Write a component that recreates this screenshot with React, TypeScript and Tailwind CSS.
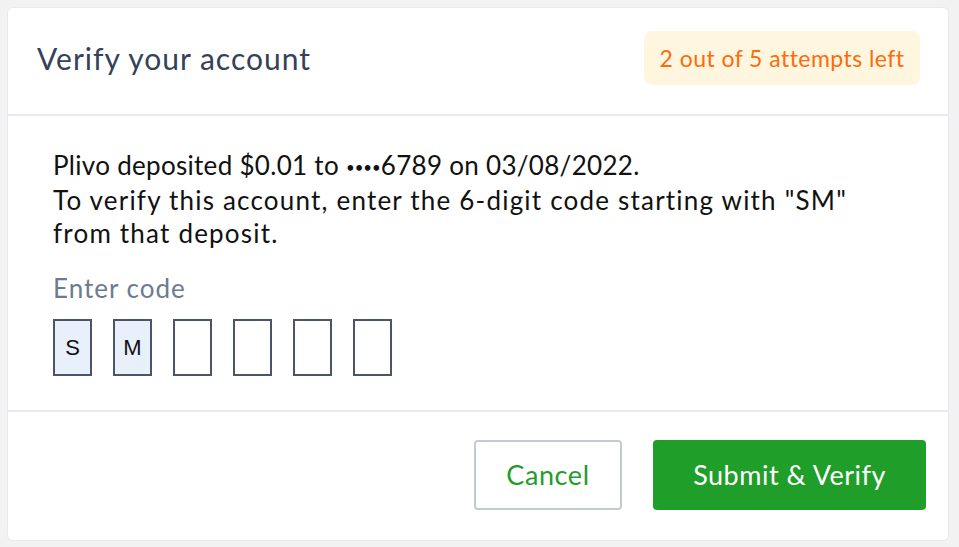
import React, { useState } from 'react';

const font = { fontFamily: 'Lato, "Open Sans", sans-serif' };

const CodeBox: React.FC<{ value: string }> = ({ value }) => (
  <div
    className={`w-[39px] h-[57px] border-2 border-[#4b5567] flex items-center justify-center text-[22px] text-[#111] ${
      value ? 'bg-[#e8f0fc]' : 'bg-white'
    }`}
    style={{ fontFamily: '"Liberation Sans", Arial, sans-serif' }}
  >
    {value}
  </div>
);

const App: React.FC = () => {
  const [code] = useState(['S', 'M', '', '', '', '']);

  return (
    <div className="min-h-screen bg-[#f2f2f3] p-[7px] pr-[10px]" style={font}>
      <div className="bg-white rounded-md border border-[#e6e9f0] w-[942px] h-[534px] flex flex-col">
        <div className="h-[108px] flex items-center justify-between pl-[29px] pr-[28px] border-b-2 border-[#e7ebf1]">
          <h1 className="text-[30px] text-[#33425a] tracking-[1px] -mt-[6px]">Verify your account</h1>
          <span className="bg-[#fff6e0] text-[#ff6a0a] text-[23px] tracking-[0.45px] rounded-lg h-[54px] w-[276px] flex items-center justify-center -mt-[6px]">
            2 out of 5 attempts left
          </span>
        </div>

        <div className="pl-[45px] pt-[33px] flex-1 border-b-2 border-[#e7ebf1]">
          <p className="text-[26px] leading-[33px] tracking-[1.2px] text-[#111]">
            <span className="tracking-[0.3px]">
              Plivo deposited $0.01 to <span className="text-[15px] tracking-[0px] align-[2px]">••••</span>6789 on 03/08/2022.
            </span>
            <br />
            To verify this account, enter the 6-digit code starting with "SM"
            <br />
            from that deposit.
          </p>
          <div className="text-[26px] tracking-[1px] text-[#6d7b90] mt-[19px]">Enter code</div>
          <div className="flex gap-[21px] mt-[11px]">
            {code.map((c, i) => (
              <CodeBox key={i} value={c} />
            ))}
          </div>
        </div>

        <div className="h-[128px] flex items-center justify-end gap-[31px] pr-[22px] pb-[2px]">
          <button className="w-[148px] h-[70px] border-2 border-[#c3cad6] rounded text-[27px] tracking-[0.6px] text-[#1f9d2b] bg-white">
            Cancel
          </button>
          <button className="w-[273px] h-[70px] rounded bg-[#1f9e2a] text-[27px] tracking-[0.5px] text-white">
            Submit &amp; Verify
          </button>
        </div>
      </div>
    </div>
  );
};

export default App;
